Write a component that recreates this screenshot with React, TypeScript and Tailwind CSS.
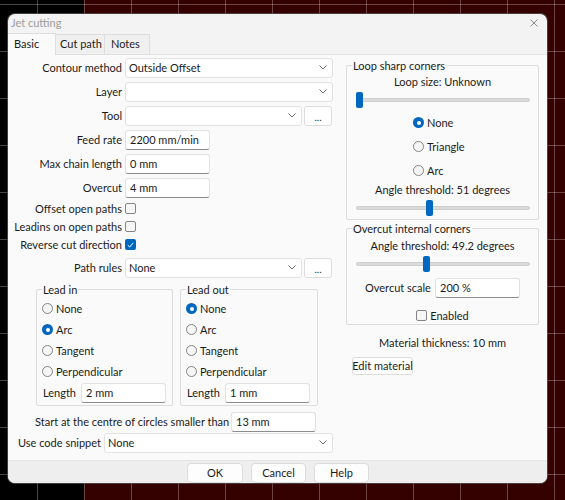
import React from 'react';

const Chevron: React.FC = () => (
    <svg width="8" height="5" viewBox="0 0 8 5" className="shrink-0">
        <path d="M0.5 0.5 L4 4 L7.5 0.5" fill="none" stroke="#6d6d6d" strokeWidth="1" />
    </svg>
);

const Select: React.FC<{ value?: string; className?: string }> = ({ value = '', className = '' }) => (
    <div className={`h-[20px] flex items-center bg-white border border-[#e2e2e2] rounded-[3px] pl-[3px] pr-[5px] ${className}`}>
        <span className="flex-1 truncate">{value}</span>
        <Chevron />
    </div>
);

const TextInput: React.FC<{ value: string; className?: string }> = ({ value, className = '' }) => (
    <div className={`h-[20px] flex items-center bg-white border border-[#e2e2e2] border-b-[#8c8c8c] rounded-[3px] pl-[4px] ${className}`}>
        {value}
    </div>
);

const DotsButton: React.FC = () => (
    <div className="h-[20px] w-[28px] ml-[2px] flex items-end justify-center pb-[3px] bg-white border border-[#dcdcdc] rounded-[3px] text-[10px] leading-[10px]">
        ...
    </div>
);

const Radio: React.FC<{ label: string; checked?: boolean }> = ({ label, checked }) => (
    <div className="flex items-center gap-[3px]">
        {checked ? (
            <span className="w-[11px] h-[11px] rounded-full bg-[#0067c0] flex items-center justify-center">
                <span className="w-[4px] h-[4px] rounded-full bg-white" />
            </span>
        ) : (
            <span className="w-[11px] h-[11px] rounded-full border border-[#858585] bg-[#f6f6f6]" />
        )}
        <span>{label}</span>
    </div>
);

const Checkbox: React.FC<{ checked?: boolean }> = ({ checked }) =>
    checked ? (
        <span className="w-[11px] h-[11px] rounded-[2px] bg-[#0067c0] flex items-center justify-center">
            <svg width="7" height="6" viewBox="0 0 7 6">
                <path d="M0.8 3.2 L2.7 5 L6.2 0.9" fill="none" stroke="white" strokeWidth="1" />
            </svg>
        </span>
    ) : (
        <span className="w-[11px] h-[11px] rounded-[2px] border border-[#858585] bg-[#f6f6f6]" />
    );

const Slider: React.FC<{ thumb: string }> = ({ thumb }) => (
    <div className="relative h-[16px] ml-[9px] mr-[8px]">
        <div className="absolute left-0 right-0 top-[6px] h-[4px] rounded-[2px] bg-[#dadada] border border-[#d0d0d0]" />
        <div className={`absolute top-0 w-[7px] h-[16px] rounded-[2px] bg-[#0067c0] ${thumb}`} />
    </div>
);

const FormRow: React.FC<{ label: string; className?: string; children: React.ReactNode }> = ({ label, className = '', children }) => (
    <div className={`flex items-center ${className}`}>
        <span className="w-[114px] text-right mr-[3px]">{label}</span>
        {children}
    </div>
);

const CheckRow: React.FC<{ label: string; checked?: boolean }> = ({ label, checked }) => (
    <div className="flex items-center h-[18px]">
        <span className="w-[114px] text-right mr-[3px]">{label}</span>
        <Checkbox checked={checked} />
    </div>
);

const LeadGroup: React.FC<{ title: string; selected: string; length: string; className?: string }> = ({ title, selected, length, className = '' }) => (
    <fieldset className={`border border-[#dcdcdc] rounded-[2px] pb-[2px] ${className}`}>
        <legend className="ml-[5px] px-[1px] leading-[14px]">{title}</legend>
        <div className="flex flex-col gap-[1px] pt-[2px] pl-[5px]">
            {['None', 'Arc', 'Tangent', 'Perpendicular'].map((o) => (
                <div key={o} className="h-[20px] flex items-center">
                    <Radio label={o} checked={o === selected} />
                </div>
            ))}
            <div className="flex items-center h-[20px] pl-[1px]">
                <span className="w-[38px]">Length</span>
                <TextInput value={length} className="w-[85px]" />
            </div>
        </div>
    </fieldset>
);

const App: React.FC = () => {
    return (
        <div className="relative w-[565px] h-[500px] overflow-hidden bg-[#350000] font-['Lato',sans-serif] text-[11px] leading-[14px] text-[#1b1b1b] whitespace-nowrap">
            <div className="absolute left-0 top-0 w-[84px] h-full bg-black" />
            <div className="absolute inset-0 bg-[linear-gradient(to_right,rgba(255,255,255,0.27)_1px,transparent_1px),linear-gradient(to_bottom,rgba(255,255,255,0.27)_1px,transparent_1px)] bg-[size:47px_47px] bg-[position:37px_4px]" />

            {/* dialog window */}
            <div className="absolute left-[8px] top-[14px] w-[539px] h-[469px] rounded-[7px] overflow-hidden bg-[#f3f3f3] shadow-[0_0_0_1px_rgba(90,90,90,0.7)] flex flex-col">
                <div className="h-[19px] flex items-center justify-between pl-[3px] pr-[9px] text-[#9c9c9c]">
                    <span>Jet cutting</span>
                    <svg width="8" height="8" viewBox="0 0 8 8">
                        <path d="M0.5 0.5 L7.5 7.5 M7.5 0.5 L0.5 7.5" stroke="#8a8a8a" strokeWidth="1" />
                    </svg>
                </div>

                <div className="h-[22px] flex items-end">
                    <div className="w-[48px] h-[22px] pl-[6px] flex items-center bg-[#fafafa] border-t border-r border-[#dedede]">Basic</div>
                    <div className="w-[49px] h-[21px] pl-[4px] flex items-center bg-[#f0f0f0] border-t border-r border-b border-[#dedede]">Cut path</div>
                    <div className="w-[45px] h-[21px] pl-[6px] flex items-center bg-[#f0f0f0] border-t border-r border-b border-[#dedede]">Notes</div>
                    <div className="flex-1 border-b border-[#e3e3e3]" />
                </div>

                <div className="h-[407px] bg-[#fafafa] flex">
                    {/* left column */}
                    <div className="w-[332px] shrink-0 flex flex-col pt-[3px]">
                        <FormRow label="Contour method">
                            <Select value="Outside Offset" className="w-[208px]" />
                        </FormRow>
                        <FormRow label="Layer" className="mt-[4px]">
                            <Select className="w-[208px]" />
                        </FormRow>
                        <FormRow label="Tool" className="mt-[4px]">
                            <Select className="w-[177px]" />
                            <DotsButton />
                        </FormRow>
                        <FormRow label="Feed rate" className="mt-[4px]">
                            <TextInput value="2200 mm/min" className="w-[85px]" />
                        </FormRow>
                        <FormRow label="Max chain length" className="mt-[4px]">
                            <TextInput value="0 mm" className="w-[85px]" />
                        </FormRow>
                        <FormRow label="Overcut" className="mt-[4px]">
                            <TextInput value="4 mm" className="w-[85px]" />
                        </FormRow>
                        <div className="mt-[2px]">
                            <CheckRow label="Offset open paths" />
                            <CheckRow label="Leadins on open paths" />
                            <CheckRow label="Reverse cut direction" checked />
                        </div>
                        <FormRow label="Path rules" className="mt-[4px]">
                            <Select value="None" className="w-[177px]" />
                            <DotsButton />
                        </FormRow>

                        <div className="flex gap-[7px] ml-[28px] mt-[5px]">
                            <LeadGroup title="Lead in" selected="Arc" length="2 mm" className="w-[137px]" />
                            <LeadGroup title="Lead out" selected="None" length="1 mm" className="w-[138px]" />
                        </div>

                        <div className="flex items-center h-[20px] mt-[6px] ml-[27px]">
                            <span className="w-[196px]">Start at the centre of circles smaller than</span>
                            <TextInput value="13 mm" className="w-[85px]" />
                        </div>
                        <div className="flex items-center h-[20px] mt-[1px] ml-[10px]">
                            <span className="w-[86px]">Use code snippet</span>
                            <Select value="None" className="w-[229px]" />
                        </div>
                    </div>

                    {/* right column */}
                    <div className="w-[193px] ml-[6px] flex flex-col">
                        <fieldset className="mt-[4px] border border-[#dcdcdc] rounded-[2px] pb-[3px]">
                            <legend className="ml-[5px] px-[1px] leading-[14px]">Loop sharp corners</legend>
                            <div className="pt-[2px] text-center">Loop size: Unknown</div>
                            <div className="mt-[3px]">
                                <Slider thumb="left-0" />
                            </div>
                            <div className="mt-[3px] pl-[66px] flex flex-col">
                                <div className="h-[24px] flex items-center"><Radio label="None" checked /></div>
                                <div className="h-[24px] flex items-center"><Radio label="Triangle" /></div>
                                <div className="h-[24px] flex items-center"><Radio label="Arc" /></div>
                            </div>
                            <div className="text-center">Angle threshold: 51 degrees</div>
                            <div className="mt-[3px]">
                                <Slider thumb="left-[70px]" />
                            </div>
                        </fieldset>

                        <fieldset className="mt-[2px] border border-[#dcdcdc] rounded-[2px] pb-[1px]">
                            <legend className="ml-[5px] px-[1px] leading-[14px]">Overcut internal corners</legend>
                            <div className="pt-[3px] text-center">Angle threshold: 49.2 degrees</div>
                            <div className="mt-[3px]">
                                <Slider thumb="left-[67px]" />
                            </div>
                            <div className="mt-[6px] pl-[18px] flex items-center h-[20px]">
                                <span className="w-[70px]">Overcut scale</span>
                                <TextInput value="200 %" className="w-[85px]" />
                            </div>
                            <div className="mt-[11px] flex items-center justify-center gap-[3px]">
                                <Checkbox />
                                <span>Enabled</span>
                            </div>
                        </fieldset>

                        <div className="mt-[11px] text-center">Material thickness: 10 mm</div>
                        <div className="mt-[7px] ml-[6px] w-[61px] h-[18px] flex items-center justify-center bg-white border border-[#dcdcdc] rounded-[3px]">
                            Edit material
                        </div>
                    </div>
                </div>

                <div className="flex-1 bg-[#eeeeee] border-t border-[#e6e6e6] flex justify-center gap-[8px] pt-[2px] pl-[1px]">
                    <div className="w-[56px] h-[20px] shrink-0 flex items-center justify-center bg-[#fdfdfd] border border-[#dcdcdc] rounded-[4px]">OK</div>
                    <div className="w-[55px] h-[20px] shrink-0 flex items-center justify-center bg-[#fdfdfd] border border-[#dcdcdc] rounded-[4px]">Cancel</div>
                    <div className="w-[55px] h-[20px] shrink-0 flex items-center justify-center bg-[#fdfdfd] border border-[#dcdcdc] rounded-[4px]">Help</div>
                </div>
            </div>
        </div>
    );
};

export default App;
